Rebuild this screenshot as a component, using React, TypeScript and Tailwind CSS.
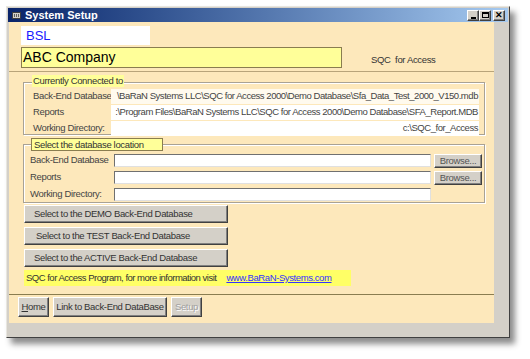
import React from 'react';

const font = { fontFamily: '"Liberation Sans", Arial, sans-serif' };

const Raised: React.FC<{ className?: string; children: React.ReactNode; disabled?: boolean }> = ({ className, children, disabled }) => (
  <div
    className={`flex items-center justify-center whitespace-nowrap bg-[#d4d0c8] border border-t-white border-l-white border-r-[#404040] border-b-[#404040] shadow-[inset_-1px_-1px_0_#808080] text-[9.5px] tracking-[-0.35px] ${disabled ? 'text-[#a0a0a0] [text-shadow:1px_1px_0_#fff]' : 'text-[#333]'} ${className ?? ''}`}
  >
    {children}
  </div>
);

const connected = [
  { label: 'Back-End Database', value: '\\BaRaN Systems LLC\\SQC for Access 2000\\Demo Database\\Sfa_Data_Test_2000_V150.mdb', bg: 'bg-[#fffaee]' },
  { label: 'Reports', value: ':\\Program Files\\BaRaN Systems LLC\\SQC for Access 2000\\Demo Database\\SFA_Report.MDB', bg: 'bg-white' },
  { label: 'Working Directory:', value: 'c:\\SQC_for_Access', bg: 'bg-white' },
];

const locations = ['Back-End Database', 'Reports', 'Working Directory:'];

const App: React.FC = () => {
  return (
    <div className="w-[530px] h-[359px] bg-white pt-[6px] pl-[6px]" style={font}>
      <div className="w-[504px] h-[332px] bg-[#d4d0c8] border border-t-[#e8e6e0] border-l-[#e8e6e0] border-r-[#404040] border-b-[#404040] p-[1px] flex flex-col shadow-[5px_6px_6px_rgba(0,0,0,0.45)]">
        {/* title bar */}
        <div className="h-[14px] flex items-center bg-gradient-to-r from-[#0a246a] to-[#a6caf0] pl-[4px] pr-[3px]">
          <div className="w-[9px] h-[7px] bg-[#d4d0c8] border border-[#404040] grid grid-cols-3 gap-[1px] p-[1px] mr-[4px]">
            <div className="bg-[#606060]" /><div className="bg-[#606060]" /><div className="bg-[#606060]" />
          </div>
          <span className="text-white font-bold text-[11px] leading-none">System Setup</span>
          <div className="ml-auto flex">
            <Raised className="w-[12px] h-[11px] items-end pb-[1px]"><div className="w-[5px] h-[2px] bg-black" /></Raised>
            <Raised className="w-[12px] h-[11px]"><div className="w-[7px] h-[6px] border border-black border-t-2" /></Raised>
            <Raised className="w-[12px] h-[11px] ml-[2px] text-black font-bold text-[9px] leading-none">✕</Raised>
          </div>
        </div>

        <div className="flex-1 pl-[1px]">
          <div className="w-[485px] h-[301px] bg-[#fde8bb]">
            {/* header */}
            <div className="pl-[12px] pt-[4px]">
              <div className="w-[129px] h-[19px] bg-white flex items-center pl-[5px] text-[13px] text-[#1a1aff]">BSL</div>
              <div className="flex items-end mt-[2px]">
                <div className="w-[321px] h-[21px] bg-[#ffff99] border border-[#8a7d50] flex items-center pl-[1px] text-[14px] text-black">ABC Company</div>
                <span className="ml-[29px] mb-[1px] text-[9.5px] tracking-[-0.35px] text-[#333] whitespace-nowrap">SQC&nbsp; for Access</span>
              </div>
            </div>
            <div className="mt-[3px] h-[1px] bg-[#b8a47a]" />

            {/* currently connected */}
            <div className="relative ml-[14px] mt-[10px] w-[462px] h-[53px] border border-[#a9a294] shadow-[inset_1px_1px_0_#fff,1px_1px_0_#fff]">
              <div className="absolute left-[8px] top-[-8px] bg-[#ffff99] px-[1px] text-[9.5px] tracking-[-0.35px] leading-[12px] text-[#333] whitespace-nowrap">Currently Connected to</div>
              <div className="flex flex-col gap-[1px] pt-[6px]">
                {connected.map((r) => (
                  <div key={r.label} className="flex items-center h-[15px]">
                    <div className="w-[87px] shrink-0 pl-[9px] text-[9.5px] tracking-[-0.35px] text-[#444] whitespace-nowrap">{r.label}</div>
                    <div className={`w-[368px] h-[15px] ${r.bg} overflow-hidden flex justify-end items-center`}>
                      <span className="whitespace-nowrap text-[9.5px] text-[#444] tracking-[-0.45px] pr-[1px]">{r.value}</span>
                    </div>
                  </div>
                ))}
              </div>
            </div>

            {/* select location */}
            <div className="relative ml-[14px] mt-[9px] w-[462px] h-[59px] border border-[#a9a294] shadow-[inset_1px_1px_0_#fff,1px_1px_0_#fff]">
              <div className="absolute left-[7px] top-[-7px] w-[132px] h-[13px] bg-[#ffff99] border border-[#8a7d50] pl-[2px] text-[9.5px] tracking-[-0.35px] leading-[11px] text-[#333] whitespace-nowrap">Select the database location</div>
              <div className="flex flex-col gap-[4px] pt-[9px]">
                {locations.map((l, i) => (
                  <div key={l} className="flex items-center h-[13px]">
                    <div className="w-[90px] shrink-0 pl-[6px] text-[9.5px] tracking-[-0.35px] text-[#444] whitespace-nowrap">{l}</div>
                    <div className="w-[317px] h-[13px] bg-white border border-t-[#707070] border-l-[#707070] border-r-[#e0e0e0] border-b-[#e0e0e0]" />
                    {i < 2 && <Raised className="ml-[3px] w-[48px] h-[14px] mt-[1px] text-[#555]">Browse...</Raised>}
                  </div>
                ))}
              </div>
            </div>

            {/* select buttons */}
            <div className="ml-[15px] mt-[2px] flex flex-col gap-[4px]">
              <Raised className="w-[204px] h-[18px] justify-start pl-[9px]">Select to the DEMO Back-End Database</Raised>
              <Raised className="w-[204px] h-[18px] justify-start pl-[11px]">Select to the TEST Back-End Database</Raised>
              <Raised className="w-[204px] h-[18px] justify-start pl-[9px]">Select to the ACTIVE Back-End Database</Raised>
            </div>

            <div className="ml-[15px] mt-[3px] w-[327px] h-[16px] bg-[#ffff66] flex items-center pl-[2px] text-[9.5px] text-[#333] whitespace-nowrap">
              <span className="tracking-[-0.5px]">SQC for Access Program, for more information visit</span>
              <span className="ml-[10px] tracking-[-0.4px] text-[#3333ff] underline">www.BaRaN-Systems.com</span>
            </div>

            <div className="mt-[8px] h-[1px] bg-[#8a7d50]" />
            <div className="flex gap-[4px] pl-[9px] pt-[2px]">
              <Raised className="w-[31px] h-[20px]"><span><span className="underline">H</span>ome</span></Raised>
              <Raised className="w-[114px] h-[20px]">Link to Back-End DataBase</Raised>
              <Raised className="w-[31px] h-[20px]" disabled>Setup</Raised>
            </div>
          </div>
        </div>
      </div>
    </div>
  );
};

export default App;
